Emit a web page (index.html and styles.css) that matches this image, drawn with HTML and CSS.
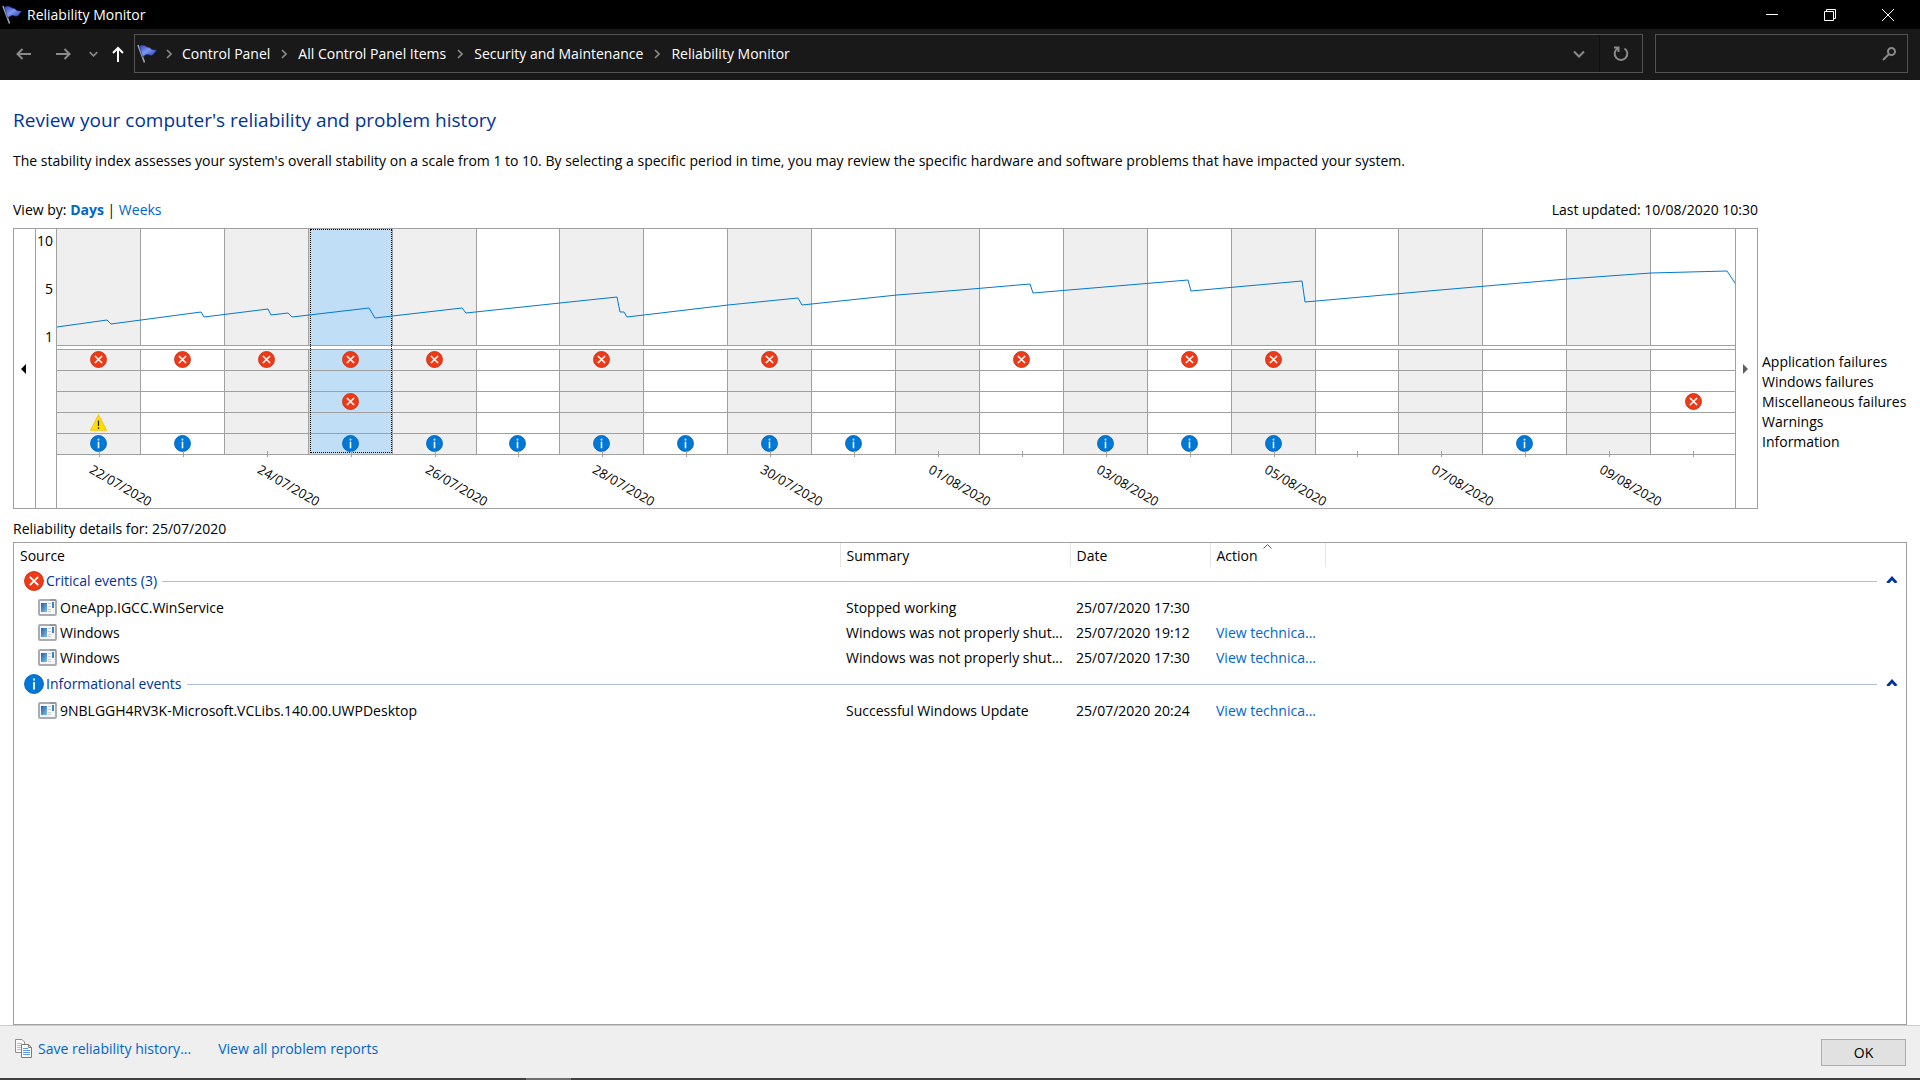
FILE: index.html
```html
<!DOCTYPE html>
<html lang="en">
<head>
 <meta charset="utf-8">
 <meta name="viewport" content="width=device-width, initial-scale=1.0">
 <title>Reliability Monitor</title>
 <link rel="stylesheet" href="styles.css">
</head>
<body>

<!-- shared icons -->
<svg class="Symbols" width="0" height="0">
 <defs>
  <linearGradient id="FlagFill" x1="0" y1="0" x2="1" y2="1">
   <stop offset="0" stop-color="#2a3fae"/>
   <stop offset="0.45" stop-color="#7d97f2"/>
   <stop offset="1" stop-color="#2238a4"/>
  </linearGradient>
  <linearGradient id="AppFill" x1="0" y1="0" x2="1" y2="1">
   <stop offset="0" stop-color="#1f5fa8"/>
   <stop offset="1" stop-color="#7fc0ee"/>
  </linearGradient>
 </defs>
 <symbol id="flag" viewBox="0 0 20 20">
  <path d="M1 1L7.500 18.500" stroke="#a5a5a5" stroke-width="1.600" fill="none"/>
  <path d="M2.500 2.500C5 0.500 7 1.500 9 2.500C11 4 12.500 3 13.500 4.500C15 6.500 17 5.500 19.500 6.500C17.500 8 17.500 9.500 16 10.500C13.500 12.500 12 9.500 9.500 10.500C8 11 7 12 5.700 13Z" fill="url(#FlagFill)" stroke="#2a40ae" stroke-width="0.600"/>
 </symbol>
 <symbol id="error" viewBox="0 0 20 20">
  <circle cx="10" cy="10" r="9.400" fill="#f03a17" stroke="#c22f14" stroke-width="1"/>
  <path d="M5.800 5.800L14.200 14.200M14.200 5.800L5.800 14.200" stroke="#fff" stroke-width="1.800"/>
 </symbol>
 <symbol id="info" viewBox="0 0 20 20">
  <circle cx="10" cy="10" r="9.400" fill="#0078d7" stroke="#0a62ad" stroke-width="1"/>
  <path d="M10 8V15.500M10 4.500V6.500" stroke="#fff" stroke-width="1.800"/>
 </symbol>
 <symbol id="warning" viewBox="0 0 20 20">
  <path d="M10 1L19.300 19H0.700Z" fill="#ffe100" stroke="#fcc21a" stroke-width="1.200"/>
  <path d="M10 7.500V14M10 15.500V17.500" stroke="#222" stroke-width="1.500"/>
 </symbol>
 <symbol id="app" viewBox="0 0 19 17">
  <rect x="1" y="1" width="17" height="15" rx="1" fill="#f7f7f7" stroke="#a9adb2" stroke-width="2"/>
  <rect x="3" y="4" width="6" height="9" fill="url(#AppFill)"/>
  <path d="M10 4.500H13M10 7.500H13M10 10.500H13M10 12.500H13" stroke="#cfcfcf"/>
  <rect x="14" y="3" width="2" height="6" fill="#3c85c9"/>
  <path d="M12.500 1H13.500M14.500 1H15.500M16.500 1H17.500" stroke="#555"/>
 </symbol>
 <symbol id="crumb" viewBox="0 0 6 10">
  <path d="M1 1L5 5L1 9" fill="none" stroke="#8a8a8a" stroke-width="1.600"/>
 </symbol>
 <symbol id="down" viewBox="0 0 12 8">
  <path d="M1 1.500L6 6.500L11 1.500" fill="none" stroke="#8a8a8a" stroke-width="2"/>
 </symbol>
 <symbol id="collapse" viewBox="0 0 12 8">
  <path d="M0.500 7L6 1L11.500 7L10 8H8.500L6 5.200L3.500 8H1Z" fill="#003399"/>
 </symbol>
</svg>

<header class="TitleBar">
 <svg class="Flag"><use href="#flag"/></svg>
 <span class="TitleText">Reliability Monitor</span>
 <button type="button" class="WindowButton" aria-label="Minimize"><svg width="12" height="12"><path d="M0 5.500H12"/></svg></button>
 <button type="button" class="WindowButton" aria-label="Restore"><svg width="12" height="12"><path d="M0.500 2.500H9.500V11.500H0.500ZM2.500 2.500V0.500H11.500V9.500H9.500"/></svg></button>
 <button type="button" class="WindowButton" aria-label="Close"><svg width="12" height="12"><path d="M0 0L12 12M12 0L0 12"/></svg></button>
</header>

<nav class="AddressRow">
 <div class="NavButtons">
  <button type="button" aria-label="Back"><svg width="16" height="12"><path d="M15 6H1.500M6.500 1L1.500 6L6.500 11"/></svg></button>
  <button type="button" aria-label="Forward"><svg width="16" height="12"><path d="M1 6H14.500M9.500 1L14.500 6L9.500 11"/></svg></button>
  <button type="button" class="Recent" aria-label="Recent locations"><svg width="9" height="6"><use href="#down"/></svg></button>
  <button type="button" class="Up" aria-label="Up"><svg width="12" height="16"><path d="M6 16V2M1 7L6 2L11 7"/></svg></button>
 </div>
 <div class="AddressBox">
  <svg class="Flag"><use href="#flag"/></svg>
  <svg class="Crumb"><use href="#crumb"/></svg>
  <a href="#">Control Panel</a>
  <svg class="Crumb"><use href="#crumb"/></svg>
  <a href="#">All Control Panel Items</a>
  <svg class="Crumb"><use href="#crumb"/></svg>
  <a href="#">Security and Maintenance</a>
  <svg class="Crumb"><use href="#crumb"/></svg>
  <a href="#">Reliability Monitor</a>
  <button type="button" class="AddressDrop" aria-label="Previous locations"><svg width="12" height="8"><use href="#down"/></svg></button>
  <button type="button" class="AddressRefresh" aria-label="Refresh"><svg width="16" height="16"><path d="M11.500 2.500A6.300 6.300 0 1 1 4.500 2.500M1 1.500H5.500V6"/></svg></button>
 </div>
 <div class="SearchBox">
  <input type="text" aria-label="Search">
  <svg width="14" height="14"><circle cx="9.500" cy="4.500" r="3.500"/><path d="M7 7L1 13"/></svg>
 </div>
</nav>

<main>
 <h1>Review your computer's reliability and problem history</h1>
 <p class="Intro">The stability index assesses your system's overall stability on a scale from 1 to 10. By selecting a specific period in time, you may review the specific hardware and software problems that have impacted your system.</p>

 <div class="ChartRow">
  <section class="ChartHolder">
   <div class="ViewBar">
    <span>View by: <a href="#" class="Current">Days</a> | <a href="#">Weeks</a></span>
    <span>Last updated: 10/08/2020 10:30</span>
   </div>
   <div class="Chart">
    <button type="button" class="Scroll" aria-label="Earlier"><svg width="5" height="10"><path d="M5 0V10L0 5Z"/></svg></button>
    <div class="Scale"><span>10</span><span>5</span><span>1</span></div>
    <div class="Plot">
     <div class="Days" id="Days"></div>
     <svg class="Line" viewBox="0 0 1678 116" preserveAspectRatio="none">
      <polyline points="0,98 50,91 54,95 144,83 147,88 211,80 214,86 231,84 235,88 312,79 318,89 405,79 409,84 503,74 560,68 563,83 567,83 570,88 671,76 741,69 745,76 840,66 903,61 973,55 976,64 1131,51 1134,62 1245,52 1248,73 1383,61 1510,50 1594,44 1670,42 1678,54"/>
     </svg>
     <div class="Dates">
      <div><span>22/07/2020</span></div>
      <div><span>24/07/2020</span></div>
      <div><span>26/07/2020</span></div>
      <div><span>28/07/2020</span></div>
      <div><span>30/07/2020</span></div>
      <div><span>01/08/2020</span></div>
      <div><span>03/08/2020</span></div>
      <div><span>05/08/2020</span></div>
      <div><span>07/08/2020</span></div>
      <div><span>09/08/2020</span></div>
     </div>
    </div>
    <button type="button" class="Scroll ScrollRight" aria-label="Later"><svg width="5" height="10"><path d="M0 0V10L5 5Z"/></svg></button>
   </div>
  </section>
  <ul class="Legend">
   <li>Application failures</li>
   <li>Windows failures</li>
   <li>Miscellaneous failures</li>
   <li>Warnings</li>
   <li>Information</li>
  </ul>
 </div>

 <h2>Reliability details for: 25/07/2020</h2>
 <div class="Details">
  <table>
   <colgroup><col class="ColSource"><col class="ColSummary"><col class="ColDate"><col class="ColAction"><col></colgroup>
   <thead>
    <tr>
     <th>Source</th>
     <th>Summary</th>
     <th>Date</th>
     <th class="Sorted">Action<svg width="9" height="5"><path d="M0.500 4.500L4.500 0.500L8.500 4.500"/></svg></th>
     <th></th>
    </tr>
   </thead>
   <tbody>
    <tr class="Group">
     <td colspan="5"><div><svg class="GroupIcon"><use href="#error"/></svg><span>Critical events (3)</span><hr><button type="button" aria-label="Collapse critical events"><svg width="12" height="8"><use href="#collapse"/></svg></button></div></td>
    </tr>
    <tr>
     <td class="Source"><svg><use href="#app"/></svg>OneApp.IGCC.WinService</td>
     <td>Stopped working</td>
     <td>25/07/2020 17:30</td>
     <td></td>
     <td></td>
    </tr>
    <tr>
     <td class="Source"><svg><use href="#app"/></svg>Windows</td>
     <td>Windows was not properly shut...</td>
     <td>25/07/2020 19:12</td>
     <td><a href="#">View technica...</a></td>
     <td></td>
    </tr>
    <tr>
     <td class="Source"><svg><use href="#app"/></svg>Windows</td>
     <td>Windows was not properly shut...</td>
     <td>25/07/2020 17:30</td>
     <td><a href="#">View technica...</a></td>
     <td></td>
    </tr>
    <tr class="Group">
     <td colspan="5"><div><svg class="GroupIcon"><use href="#info"/></svg><span>Informational events</span><hr><button type="button" aria-label="Collapse informational events"><svg width="12" height="8"><use href="#collapse"/></svg></button></div></td>
    </tr>
    <tr>
     <td class="Source"><svg><use href="#app"/></svg>9NBLGGH4RV3K-Microsoft.VCLibs.140.00.UWPDesktop</td>
     <td>Successful Windows Update</td>
     <td>25/07/2020 20:24</td>
     <td><a href="#">View technica...</a></td>
     <td></td>
    </tr>
   </tbody>
  </table>
 </div>
</main>

<footer>
 <svg class="CopyIcon" width="17" height="19" viewBox="0 0 17 19">
  <path d="M0.500 0.500H7L9.500 3V13.500H0.500Z" fill="#fff" stroke="#8f8f8f"/>
  <path d="M2 4.500H7M2 6.500H7M2 8.500H6M2 10.500H6" stroke="#9cc3ee"/>
  <path d="M6.500 5.500H13.500L16.500 8.500V18.500H6.500Z" fill="#fff" stroke="#7b7b7b"/>
  <path d="M13.500 5.500V8.500H16.500" fill="none" stroke="#7b7b7b"/>
  <path d="M8 9.500H13M8 11.500H15M8 13.500H15M8 15.500H15" stroke="#5a9be0"/>
 </svg>
 <a href="#">Save reliability history...</a>
 <a href="#" class="Reports">View all problem reports</a>
 <button type="button" class="OkButton">OK</button>
</footer>
<div class="Taskbar"><div></div></div>

<script>
 // One entry per day, rows: application, windows, misc, warning, information
 var days = [
  'E--WI', 'E---I', 'E----', 'E-E-I', 'E---I',
  '----I', 'E---I', '----I', 'E---I', '----I',
  '-----', 'E----', '----I', 'E---I', 'E---I',
  '-----', '-----', '----I', '-----', '--E--'
 ];
 var icons = { E: 'error', W: 'warning', I: 'info' };
 var selected = 3;
 var html = '';
 for (var i=0; i<days.length; i++) {
  html += '<div class="Day' + (i==selected ? ' Selected' : '') + '"><div class="Graph"></div>';
  for (var j=0; j<5; j++) {
   var icon = icons[days[i][j]];
   html += '<div class="Cell">' + (icon ? '<svg><use href="#' + icon + '"/></svg>' : '') + '</div>';
  }
  html += '</div>';
 }
 document.getElementById('Days').innerHTML = html;
</script>
</body>
</html>
```
FILE: styles.css
```css
* {
 box-sizing:border-box;
}
body {
 margin:0;
 min-height:100vh;
 display:flex;
 flex-direction:column;
 background:#FFFFFF;
 color:#000000;
}
body, button, input {
 font-family:"Open Sans", "Noto Sans", sans-serif;
 font-size:14px;
 line-height:20px;
}
button {
 display:flex;
 align-items:center;
 justify-content:center;
 margin:0;
 padding:0;
 border:0;
 background:none;
 color:#000000;
}
a {
 color:#0066CC;
 text-decoration:none;
}
svg {
 display:block;
 flex:none;
}
.Symbols {
 position:absolute;
}
.Flag {
 width:20px;
 height:20px;
}

/* Title bar */
.TitleBar {
 display:flex;
 align-items:center;
 height:29px;
 padding:0 3px 0 2px;
 background:#000000;
 color:#FFFFFF;
}
.TitleText {
 flex:1;
 padding-left:5px;
}
.WindowButton {
 width:58px;
 height:29px;
}
.WindowButton path {
 fill:none;
 stroke:#FFFFFF;
}

/* Address bar */
.AddressRow {
 display:flex;
 align-items:center;
 height:51px;
 padding:0 12px 2px 4px;
 background:#191919;
}
.NavButtons {
 display:flex;
 width:130px;
}
.NavButtons button {
 width:39px;
 height:30px;
}
.NavButtons .Recent {
 width:22px;
}
.NavButtons .Up {
 width:28px;
}
.NavButtons path {
 fill:none;
 stroke:#8A8A8A;
 stroke-width:2;
}
.NavButtons .Up path {
 stroke:#FFFFFF;
}
.AddressBox {
 display:flex;
 align-items:center;
 flex:1;
 height:39px;
 border:1px solid #535353;
 padding-left:2px;
}
.AddressBox a {
 color:#FFFFFF;
}
.Crumb {
 width:6px;
 height:10px;
 margin:0 11px;
}
.Flag + .Crumb {
 margin:0 10px 0 9px;
}
.AddressDrop {
 width:42px;
 height:37px;
 margin-left:auto;
 border-right:1px solid #101010;
}
.AddressRefresh {
 width:42px;
 height:37px;
}
.AddressRefresh path,
.SearchBox path,
.SearchBox circle {
 fill:none;
 stroke:#8A8A8A;
 stroke-width:2;
}
.SearchBox {
 display:flex;
 align-items:center;
 width:253px;
 height:39px;
 margin-left:12px;
 padding-right:11px;
 border:1px solid #535353;
}
.SearchBox input {
 flex:1;
 min-width:0;
 height:30px;
 border:0;
 background:none;
 color:#FFFFFF;
}

/* Page */
main {
 flex:1;
 display:flex;
 flex-direction:column;
 padding:28px 13px 0;
}
h1 {
 margin:0;
 font-size:19px;
 font-weight:normal;
 line-height:24px;
 color:#003399;
}
.Intro {
 margin:19px 0 29px;
}
.ChartRow {
 display:flex;
 align-items:flex-end;
}
.ChartHolder {
 flex:1;
}
.ViewBar {
 display:flex;
 justify-content:space-between;
 padding-bottom:8px;
}
.Current {
 font-weight:bold;
}
.Chart {
 display:flex;
 height:281px;
 border:1px solid #A0A0A0;
}
.Scroll {
 width:22px;
 padding-right:2px;
 border-right:1px solid #A0A0A0;
}
.ScrollRight {
 border-right:0;
 border-left:1px solid #A0A0A0;
 fill:#606060;
}
.Scale {
 display:flex;
 flex-direction:column;
 justify-content:space-between;
 width:20px;
 height:118px;
 padding:2px 3px 0 0;
 text-align:right;
}
.Plot {
 position:relative;
 flex:1;
 border-left:1px solid #A0A0A0;
}
.Days {
 display:grid;
 grid-template-columns:repeat(20, 1fr);
 border-bottom:1px solid #A0A0A0;
}
.Day {
 position:relative;
}
.Day:nth-child(odd) .Graph,
.Day:nth-child(odd) .Cell {
 background:#EFEFEF;
}
.Graph {
 height:117px;
 margin-bottom:3px;
 border-bottom:1px solid #A0A0A0;
}
.Cell {
 display:flex;
 align-items:center;
 justify-content:center;
 height:21px;
 padding-bottom:2px;
 border-top:1px solid #A0A0A0;
}
.Graph,
.Cell {
 border-right:1px solid #A0A0A0;
}
.Day:last-child .Graph,
.Day:last-child .Cell {
 border-right:0;
}
.Cell svg {
 width:17px;
 height:17px;
}
.Day.Selected .Graph,
.Day.Selected .Cell {
 background:#C0DEF5;
}
.Selected::before {
 content:"";
 position:absolute;
 inset:0 1px 1px 1px;
 border:1px dotted #000000;
}
/* tick under each day */
.Day::after {
 content:"";
 position:absolute;
 left:50%;
 bottom:-3px;
 width:1px;
 height:6px;
 background:#A0A0A0;
}
.Line {
 position:absolute;
 top:0;
 left:0;
 width:100%;
 height:116px;
}
.Line polyline {
 fill:none;
 stroke:#0078D7;
 stroke-width:1;
 vector-effect:non-scaling-stroke;
}
.Dates {
 display:grid;
 grid-template-columns:repeat(10, 1fr);
}
.Dates div {
 position:relative;
 height:54px;
 padding:3px 0 0 34px;
}
/* small break in the frame below each label */
.Dates div::after {
 content:"";
 position:absolute;
 left:85px;
 bottom:-1px;
 width:2px;
 height:1px;
 background:#FFFFFF;
}
.Dates span {
 display:inline-block;
 font-size:13px;
 line-height:18px;
 transform:rotate(30deg);
 transform-origin:left center;
}
.Legend {
 width:149px;
 margin:0 0 57px;
 padding:0 0 0 4px;
 list-style:none;
 white-space:nowrap;
}

/* Details list */
h2 {
 margin:10px 0 3px;
 font-size:14px;
 font-weight:normal;
 line-height:20px;
}
.Details {
 flex:1;
 border:1px solid #A0A0A0;
}
table {
 width:100%;
 table-layout:fixed;
 border-collapse:collapse;
}
.ColSource {
 width:826px;
}
.ColSummary {
 width:230px;
}
.ColDate {
 width:140px;
}
.ColAction {
 width:115px;
}
th {
 position:relative;
 height:24px;
 padding:2px 6px 0;
 border-right:1px solid #E5E5E5;
 font-weight:normal;
 text-align:left;
}
th:last-child {
 border-right:0;
}
.Sorted svg {
 position:absolute;
 top:1px;
 left:52px;
 fill:none;
 stroke:#606060;
}
td {
 height:25px;
 padding:0 0 0 6px;
 white-space:nowrap;
}
.Source {
 padding-left:24px;
}
.Source svg {
 display:inline-block;
 width:19px;
 height:17px;
 margin-right:3px;
 vertical-align:-3px;
}
.Group td {
 height:28px;
 padding:0 8px 0 10px;
 color:#003399;
}
.Group div {
 display:flex;
 align-items:center;
}
.GroupIcon {
 width:20px;
 height:20px;
 margin-right:2px;
}
.Group hr {
 flex:1;
 height:1px;
 margin:0 9px 0 5px;
 border:0;
 background:#B0BDDE;
}
.Group button {
 width:12px;
 padding-bottom:4px;
}

/* Bottom bar */
footer {
 display:flex;
 align-items:flex-start;
 height:53px;
 padding:13px 14px 0 15px;
 border-top:1px solid #CCCCCC;
 background:#EFEFEF;
}
.CopyIcon {
 margin-right:6px;
}
.Reports {
 margin-left:27px;
}
.OkButton {
 width:85px;
 height:27px;
 margin-left:auto;
 border:1px solid #ADADAD;
 background:#E1E1E1;
}
.Taskbar {
 height:2px;
 background:#404040;
}
.Taskbar div {
 width:45px;
 height:2px;
 margin-left:526px;
 background:#707070;
}
```
